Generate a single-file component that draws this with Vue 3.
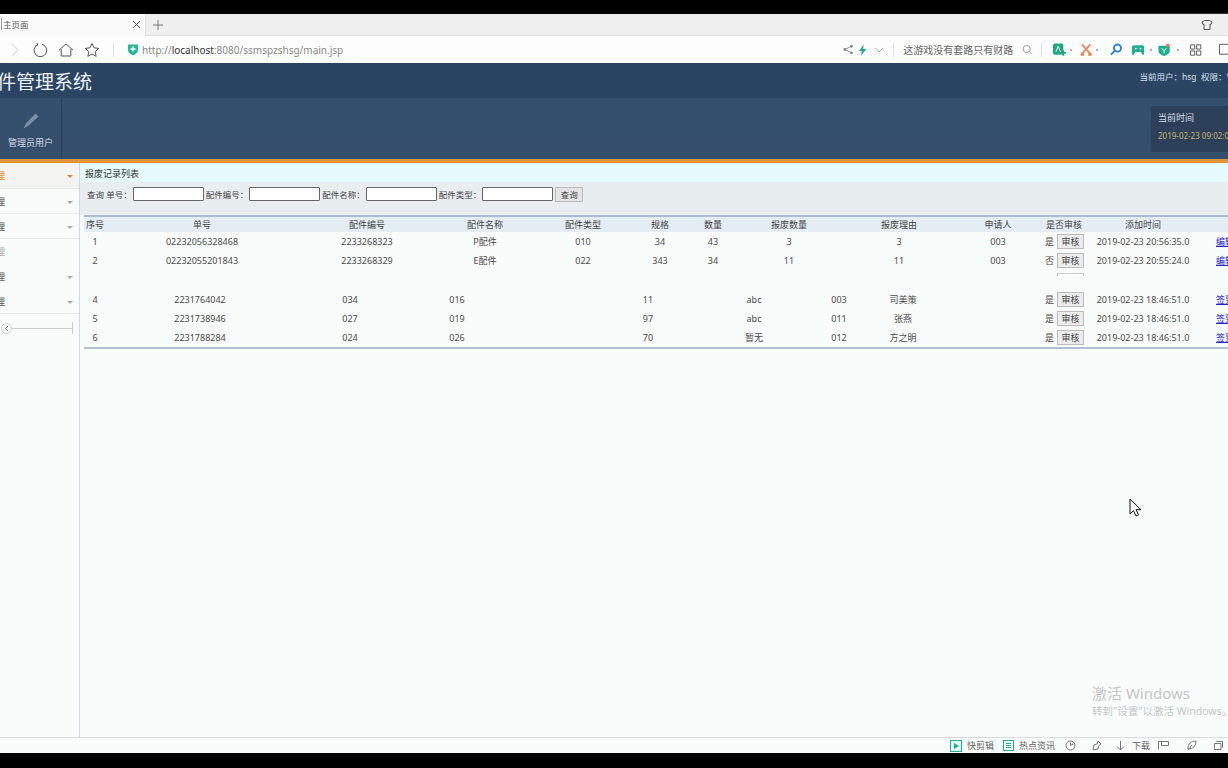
<template>
  <div class="page">
    <div class="blackbar top"><span class="edge"></span></div>

    <div class="tabs">
      <div class="tab">
        <span class="tab-title">主页面</span>
        <svg class="tab-x" width="9" height="9" viewBox="0 0 9 9"><path d="M1 1l7 7M8 1L1 8" stroke="#555" fill="none"/></svg>
      </div>
      <svg class="tab-add" width="12" height="12" viewBox="0 0 12 12"><path d="M6 1v10M1 6h10" stroke="#777" fill="none"/></svg>
      <svg class="shirt" width="12" height="12" viewBox="0 0 12 12"><path d="M3.500 1.500h5L11 3l-1 2.500-1-.4v5.400H3V5.100l-1 .4L1 3z" stroke="#555" fill="none"/></svg>
    </div>

    <div class="address">
      <svg class="nav" width="16" height="16" viewBox="0 0 16 16"><path d="M6 2l6 6-6 6" stroke="#ddd" stroke-width="1.200" fill="none"/></svg>
      <svg class="nav" width="16" height="16" viewBox="0 0 16 16"><path d="M5.500 2.800A6.300 6.300 0 1 0 10 2.300M5 .8l.7 2.300-2.300.6" stroke="#555" fill="none"/></svg>
      <svg class="nav" width="16" height="16" viewBox="0 0 16 16"><path d="M1 8.200L8 1.800l7 6.400M3.200 7v7h9.600V7" stroke="#555" fill="none"/></svg>
      <svg class="nav" width="16" height="16" viewBox="0 0 16 16"><path d="M8 1.500l2 4.300 4.700.6-3.500 3.200.9 4.700L8 12l-4.100 2.300.9-4.700L1.300 6.400 6 5.800z" stroke="#555" fill="none"/></svg>
      <span class="vline"></span>
      <svg class="shield" width="12" height="13" viewBox="0 0 12 13"><path d="M1 1.500h10v5.500c0 2.500-2.500 4.300-5 5.300-2.500-1-5-2.800-5-5.300z" fill="#25b99a"/><path d="M6 3.500v5M3.500 6h5" stroke="#fff" stroke-width="1.400"/></svg>
      <span class="url">http://<b>localhost</b>:8080/ssmspzshsg/main.jsp</span>

      <span class="tools">
        <svg width="11" height="11" viewBox="0 0 11 11"><circle cx="2" cy="5.500" r="1.500" fill="#888"/><circle cx="9" cy="2" r="1.500" fill="#888"/><circle cx="9" cy="9" r="1.500" fill="#888"/><path d="M2 5.500L9 2M2 5.500L9 9" stroke="#888"/></svg>
        <svg class="t-bolt" width="8" height="12" viewBox="0 0 8 12"><path d="M5 0L0 7h3l-1 5 6-7H4.500z" fill="#25a98a"/></svg>
        <svg class="t-chev" width="9" height="6" viewBox="0 0 9 6"><path d="M.5 1l4 4 4-4" stroke="#999" fill="none"/></svg>
        <span class="vline v2"></span>
        <span class="hot">这游戏没有套路只有财路</span>
        <svg class="t-find" width="11" height="11" viewBox="0 0 11 11"><circle cx="5" cy="5" r="3.800" stroke="#999" fill="none"/><path d="M8 8l2.500 2.500" stroke="#999"/></svg>
        <span class="vline v3"></span>
        <svg class="t-a" width="15" height="14" viewBox="0 0 15 14"><rect x="0" y="0" width="11" height="12" rx="2" fill="#20a884"/><path d="M3 9l2.500-6L8 9" stroke="#fff" fill="none"/><path d="M11 7v6M8 10h6" stroke="#20a884" stroke-width="2"/></svg>
        <i class="dot d1"></i>
        <svg class="t-cut" width="13" height="14" viewBox="0 0 13 14"><path d="M2 1l8 9M11 1L3 10" stroke="#e58a5c" stroke-width="2"/><circle cx="2.500" cy="11.500" r="2" fill="#e58a5c"/><circle cx="10.500" cy="11.500" r="2" fill="#e58a5c"/></svg>
        <i class="dot d2"></i>
        <svg class="t-mag" width="13" height="13" viewBox="0 0 13 13"><circle cx="8" cy="5" r="3.800" stroke="#2f7fd0" stroke-width="2" fill="none"/><path d="M5 8l-4 4" stroke="#2f7fd0" stroke-width="2"/></svg>
        <svg class="t-game" width="13" height="12" viewBox="0 0 13 12"><path d="M2 1h9c1 0 2 1 2 2v7c0 1.500-2 1.500-2.500 0L9.500 8h-6l-1 2c-.5 1.500-2.500 1.500-2.500 0V3c0-1 1-2 2-2z" fill="#1fae8e"/><circle cx="4" cy="4.500" r="1" fill="#fff"/><circle cx="9" cy="4.500" r="1" fill="#fff"/></svg>
        <i class="dot d3"></i>
        <svg class="t-sec" width="13" height="14" viewBox="0 0 13 14"><path d="M.5 2.500h12V8c0 2.500-3 4.500-6 5.500C3.500 12.500.5 10.500.5 8z" fill="#1fae8e"/><path d="M4 5l2.500 3L9 5M6.500 8v2.500" stroke="#fff" fill="none"/><circle cx="10.500" cy="2" r="2" fill="#e8825c"/></svg>
        <i class="dot d4"></i>
        <svg class="t-grid" width="12" height="12" viewBox="0 0 12 12"><path d="M.5.5h4.500v4.500H.5zM7 .5h4.500v4.500H7zM.5 7h4.500v4.500H.5zM7 7h4.500v4.500H7z" stroke="#555" fill="none"/></svg>
        <svg class="t-last" width="10" height="13" viewBox="0 0 10 13"><path d="M.5 1v10.500H10M.5 1H10" stroke="#555" fill="none"/></svg>
      </span>
    </div>

    <header class="head1">
      <span class="sys">配件管理系统</span>
      <span class="who">当前用户：hsg&nbsp;&nbsp;权限：管理员</span>
    </header>

    <div class="head2">
      <div class="role">
        <svg width="18" height="18" viewBox="0 0 18 18"><path d="M13.500 1.500l3 3L6 14l-4.500 2.500L4 11.500z" fill="#7d8fa3"/></svg>
        <span>管理员用户</span>
      </div>
      <div class="clock">
        <span class="c-label">当前时间</span>
        <span class="c-time">2019-02-23 09:02:05</span>
      </div>
    </div>
    <div class="orange"></div>

    <div class="main">
      <aside class="side">
        <div v-for="(m, i) in menus" :key="i" class="m-row" :class="{ on: i === 0, off: !m.arrow, plain: i === 3 || i === 4 }">
          <span class="m-text">{{ m.text }}</span>
          <i v-if="m.arrow" class="m-arrow"></i>
        </div>
        <div class="slider">
          <span class="s-knob">
            <svg width="5" height="7" viewBox="0 0 5 7"><path d="M4 1L1.500 3.500 4 6" stroke="#888" fill="none"/></svg>
          </span>
          <span class="s-line"></span>
          <span class="s-tick"></span>
        </div>
      </aside>

      <section class="content">
        <div class="c-title">报废记录列表</div>
        <div class="search">
          <span>查询 单号：</span><input class="s-in" />
          <span>配件编号：</span><input class="s-in" />
          <span>配件名称：</span><input class="s-in" />
          <span>配件类型：</span><input class="s-in" />
          <button class="s-btn">查询</button>
        </div>

        <div class="tbl">
          <div class="t-row t-head cols-a">
            <span v-for="h in heads" :key="h">{{ h }}</span>
          </div>
          <div v-for="r in topRows" :key="r[0]" class="t-row cols-a">
            <span v-for="(c, i) in r.slice(0, 10)" :key="i">{{ c }}</span>
            <span class="check">{{ r[10] }}<button class="chk-btn">审核</button></span>
            <span>{{ r[11] }}</span>
            <a class="lnk">编辑</a>
          </div>
          <div class="t-gap"><span class="cut-btn"></span></div>
          <div v-for="r in lowRows" :key="r[0]" class="t-row cols-b">
            <span v-for="(c, i) in r.slice(0, 10)" :key="i">{{ c }}</span>
            <span class="check">是<button class="chk-btn">审核</button></span>
            <span>2019-02-23 18:46:51.0</span>
            <a class="lnk">签到</a>
          </div>
        </div>
      </section>
    </div>

    <div class="status">
      <svg class="st-a" width="12" height="12" viewBox="0 0 12 12"><rect x=".5" y=".5" width="11" height="11" stroke="#1fae8e" fill="#e8f8f4"/><path d="M4 3l5 3-5 3z" fill="#1fae8e"/></svg>
      <span class="st-t">快剪辑</span>
      <svg class="st-b" width="11" height="11" viewBox="0 0 11 11"><rect x=".5" y=".5" width="10" height="10" stroke="#1fae8e" fill="none"/><path d="M3 3.500h5M3 5.500h5M3 7.500h5" stroke="#1fae8e"/></svg>
      <span class="st-t">热点资讯</span>
      <svg class="st-c" width="11" height="11" viewBox="0 0 11 11"><circle cx="5.500" cy="5.500" r="4.500" stroke="#777" fill="none"/><path d="M5.500 2.500v3L8 4" stroke="#777" fill="none"/></svg>
      <svg class="st-d" width="11" height="11" viewBox="0 0 11 11"><path d="M7 1l3 3-2.500 2-.5 3-5 1 1-5 3-1z" stroke="#777" fill="none"/></svg>
      <svg class="st-e" width="9" height="10" viewBox="0 0 9 10"><path d="M4.500 0v9M1 5.500L4.500 9 8 5.500" stroke="#777" fill="none"/></svg>
      <span class="st-t st-dl">下载</span>
      <svg class="st-f" width="11" height="9" viewBox="0 0 11 9"><path d="M.5 8.500v-8h10v4h-7v-4" stroke="#777" fill="none"/></svg>
      <svg class="st-g" width="10" height="11" viewBox="0 0 10 11"><path d="M1 8c0-4 3-7 8-7 0 5-3 8-8 8zM1 10l4-5" stroke="#777" fill="none"/></svg>
      <svg class="st-h" width="9" height="9" viewBox="0 0 9 9"><path d="M.5 2.500h6.500v6H.5zM2.500.5h6v6" stroke="#777" fill="none"/></svg>
    </div>
    <div class="blackbar bottom"></div>

    <div class="activate">
      <div class="a1">激活 Windows</div>
      <div class="a2">转到"设置"以激活 Windows。</div>
    </div>
    <svg class="cursor" width="13" height="19" viewBox="0 0 13 19"><path d="M1 1v15l3.500-3.300 2.500 5.300 2.500-1.100-2.500-5.200H12z" fill="#fff" stroke="#111"/></svg>
  </div>
</template>

<script setup>
const menus = [
  { text: '配件管理', arrow: true },
  { text: '库存管理', arrow: true },
  { text: '报废管理', arrow: true },
  { text: '采购管理', arrow: false },
  { text: '系统管理', arrow: true },
  { text: '用户管理', arrow: true }
]

const heads = ['序号', '单号', '配件编号', '配件名称', '配件类型', '规格', '数量', '报废数量', '报废理由', '申请人', '是否审核', '添加时间']

const topRows = [
  ['1', '02232056328468', '2233268323', 'P配件', '010', '34', '43', '3', '3', '003', '是', '2019-02-23 20:56:35.0'],
  ['2', '02232055201843', '2233268329', 'E配件', '022', '343', '34', '11', '11', '003', '否', '2019-02-23 20:55:24.0']
]

const lowRows = [
  ['4', '2231764042', '034', '016', '', '11', 'abc', '003', '司美策', ''],
  ['5', '2231738946', '027', '019', '', '97', 'abc', '011', '张燕', ''],
  ['6', '2231788284', '024', '026', '', '70', '暂无', '012', '方之明', '']
]
</script>

<style>
html, body { margin: 0; background: #000; overflow: hidden; }
</style>

<style scoped>
.page { position: relative; width: 1228px; height: 768px; display: flex; flex-direction: column; overflow: hidden; font-family: "Noto Sans", "Noto Sans CJK SC", sans-serif; font-size: 9px; color: #4a4a4a; background: #f8fcfa; }
.blackbar { background: #000; flex: none; }
.blackbar.top { height: 14px; position: relative; }
.edge { position: absolute; left: 1040px; right: 0; bottom: 0; height: 1px; background: #333; }
.blackbar.bottom { height: 15px; }

.tabs { height: 22px; flex: none; background: #efefef; display: flex; align-items: center; border-bottom: 1px solid #ddd; box-sizing: border-box; }
.tab { width: 146px; height: 22px; background: #fbfbfb; display: flex; align-items: center; justify-content: space-between; box-sizing: border-box; padding: 0 4px 2px 1px; border-right: 1px solid #ddd; }
.tab-title { color: #555; font-size: 8.500px; border-left: 1px solid #999; padding-left: 1px; }
.tab-x { margin-top: 2px; }
.tab-add { margin-left: 6px; }
.shirt { margin-left: auto; margin-right: 15px; }

.address { height: 27px; flex: none; background: #fdfdfd; display: flex; align-items: center; padding-left: 6px; gap: 10px; box-sizing: border-box; }
.nav { flex: none; }
.vline { width: 1px; height: 14px; background: #e2e2e2; flex: none; margin-left: 3px; }
.shield { margin-left: 3px; flex: none; }
.url { font-size: 10px; color: #8a8a8a; margin-left: -7px; white-space: nowrap; }
.url b { font-weight: 400; color: #333; }
.tools { margin-left: auto; display: flex; align-items: center; width: 385px; flex: none; }
.t-bolt { margin-left: 6px; }
.t-chev { margin-left: 8px; }
.v2 { margin-left: 10px; }
.hot { margin-left: 9px; font-size: 10px; color: #666; white-space: nowrap; }
.t-find { margin-left: 9px; }
.v3 { margin-left: 8px; }
.t-a { margin-left: 11px; }
.dot { width: 2px; height: 2px; background: #999; border-radius: 50%; display: block; flex: none; }
.d1 { margin-left: 3px; }
.t-cut { margin-left: 8px; }
.d2 { margin-left: 4px; }
.t-mag { margin-left: 12px; }
.t-game { margin-left: 10px; }
.d3 { margin-left: 6px; }
.t-sec { margin-left: 6px; }
.d4 { margin-left: 7px; }
.t-grid { margin-left: 11px; }
.t-last { margin-left: 17px; }

.head1 { height: 35px; flex: none; background: #2a4563; display: flex; align-items: center; justify-content: space-between; color: #eef2f5; overflow: hidden; }
.sys { font-size: 19px; margin-left: -22px; white-space: nowrap; font-family: "Noto Sans CJK SC", sans-serif; }
.who { font-size: 8.500px; margin-right: -24px; white-space: nowrap; margin-top: -9px; color: #d9e0e7; }

.head2 { height: 61px; flex: none; background: linear-gradient(#35506e, #344e6b); display: flex; justify-content: space-between; align-items: flex-start; overflow: hidden; }
.role { width: 62px; height: 61px; border-right: 1px solid #28405a; box-sizing: border-box; display: flex; flex-direction: column; align-items: center; padding-top: 14px; gap: 6px; color: #d5dde5; white-space: nowrap; }
.clock { width: 77px; height: 46px; margin-top: 8px; background: #2c4059; box-sizing: border-box; padding: 5px 0 0 7px; display: flex; flex-direction: column; gap: 6px; white-space: nowrap; }
.c-label { color: #d5dde5; }
.c-time { color: #c9b56e; font-size: 8px; }
.orange { height: 4px; flex: none; background: #e2943c; }

.main { flex: 1; display: flex; min-height: 0; }
.side { width: 80px; flex: none; border-right: 1px solid #cfd8dc; box-sizing: border-box; }
.m-row { height: 25px; border-bottom: 1px solid #e6e8e8; box-sizing: border-box; display: flex; align-items: center; justify-content: space-between; padding-right: 6px; overflow: hidden; color: #555; }
.m-row.on { height: 26px; background: #f3f3f1; color: #e2862c; }
.m-row.off { color: #aaa; }
.m-row.plain { border-bottom-color: transparent; }
.m-text { margin-left: -31px; white-space: nowrap; font-size: 9px; }
.m-arrow { width: 0; height: 0; margin-top: 2px; border: 3px solid transparent; border-top: 3px solid #aaa; border-bottom: 0; }
.m-row.on .m-arrow { border-top-color: #e2862c; }
.slider { display: flex; align-items: center; height: 28px; padding-left: 1px; }
.s-knob { width: 9px; height: 9px; border: 1px solid #ccc; border-radius: 50%; display: flex; align-items: center; justify-content: center; box-sizing: content-box; flex: none; }
.s-line { width: 60px; height: 1px; background: #ccc; }
.s-tick { width: 1px; height: 12px; background: #ccc; flex: none; }

.content { flex: 1; min-width: 0; overflow: hidden; }
.c-title { height: 19px; background: #e5fafa; padding: 3px 0 0 5px; box-sizing: border-box; color: #333; line-height: 16px; white-space: nowrap; }
.search { height: 33px; background: #e8eef0; display: flex; align-items: center; padding: 0 0 9px 7px; box-sizing: border-box; white-space: nowrap; color: #444; font-size: 8.500px; }
.s-in { width: 71px; height: 14px; box-sizing: border-box; border: 1px solid #666; background: #fff; margin: 0 2px 0 1px; padding: 0; border-radius: 1px; flex: none; }
.s-btn { width: 28px; height: 15px; padding: 0; font: inherit; color: #444; background: #e4e4e4; border: 1px solid #bbb; box-sizing: border-box; flex: none; }

.tbl { margin: 0 0 0 4px; width: 1180px; border-top: 2px solid #a9bcd4; border-bottom: 2px solid #b2c0d0; }
.t-row { display: grid; height: 19px; align-items: center; text-align: center; white-space: nowrap; }
.t-row.t-head { height: 15px; background: #e4edf3; color: #444; }
.cols-a { grid-template-columns: 22px 192px 138px 98px 98px 56px 50px 102px 118px 80px 52px 106px 1fr; }
.cols-b { grid-template-columns: 22px 188px 112px 102px 92px 96px 116px 54px 74px 98px 52px 106px 1fr; }
.t-row .check { display: flex; align-items: center; justify-content: flex-end; gap: 3px; padding-right: 6px; }
.chk-btn { width: 27px; height: 15px; padding: 0; font: inherit; color: #444; background: #ececec; border: 1px solid #bbb; box-sizing: border-box; }
.lnk { color: #2222cc; text-decoration: underline; text-align: left; padding-left: 20px; }
.t-gap { height: 20px; overflow: hidden; position: relative; }
.cut-btn { position: absolute; left: 973px; top: 3px; width: 27px; height: 3px; border: 1px solid #ccc; border-bottom: 0; box-sizing: border-box; background: #fff; }

.status { height: 16px; flex: none; border-top: 1px solid #d8dcdc; box-sizing: border-box; display: flex; align-items: center; color: #666; white-space: nowrap; }
.st-a { margin-left: 950px; }
.st-t { margin-left: 5px; }
.st-b { margin-left: 9px; }
.st-c { margin-left: 10px; }
.st-d { margin-left: 15px; }
.st-e { margin-left: 14px; }
.st-dl { margin-left: 7px; }
.st-f { margin-left: 8px; }
.st-g { margin-left: 18px; }
.st-h { margin-left: 17px; }

.activate { position: absolute; left: 1092px; top: 684px; white-space: nowrap; color: #c2c6c6; }
.a1 { font-size: 15px; line-height: 18px; }
.a2 { font-size: 10.500px; line-height: 14px; margin-top: 2px; }
.cursor { position: absolute; left: 1129px; top: 498px; }
</style>
